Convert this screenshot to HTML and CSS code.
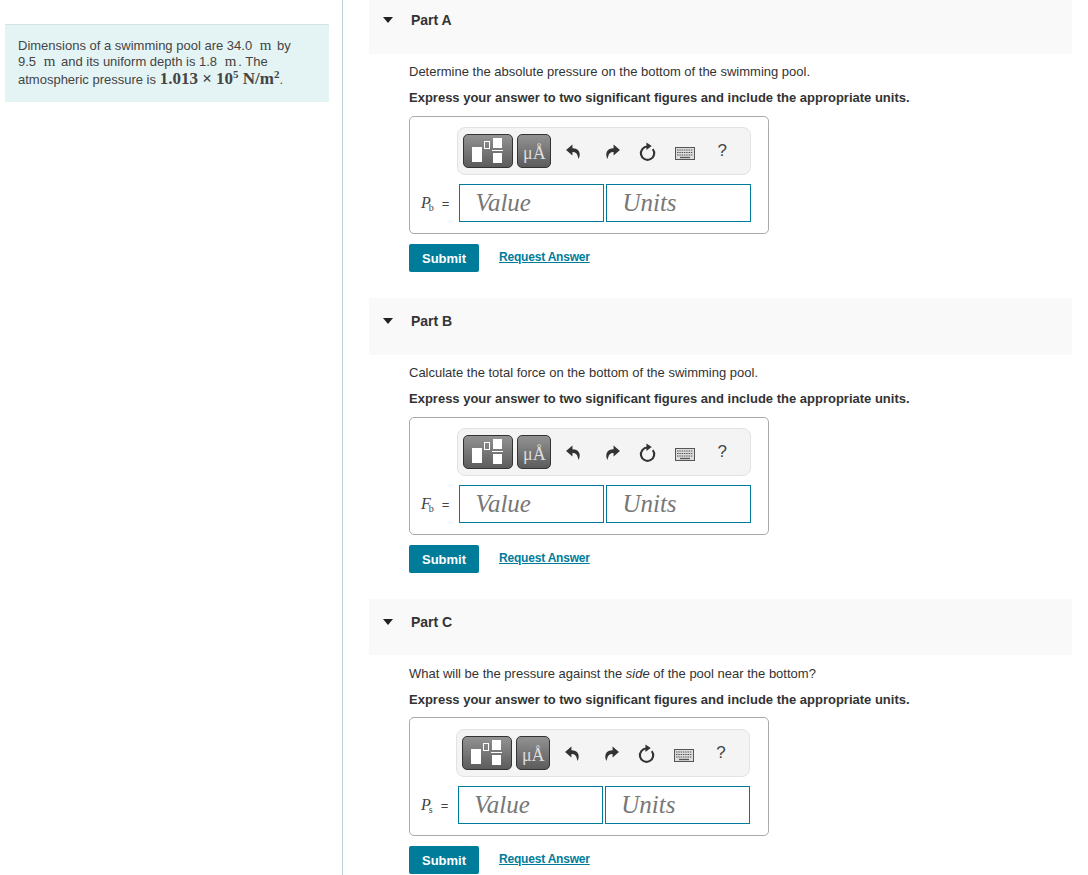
FILE: index.html
```
<!DOCTYPE html>
<html lang="en">
<head>
<meta charset="utf-8">
<title>Swimming pool pressure</title>
<link rel="stylesheet" href="styles.css">
</head>
<body>
<svg class="defs" width="0" height="0" aria-hidden="true">
  <defs>
    <symbol id="undo" viewBox="0 0 16 16"><path d="M7 1.5 1 6.7l6 5V8.4c2.6-.1 4.3.8 5 4.1.3.9.6 2 .8 2.5 1-2.2 1.4-4.4.7-6.4C12.700 6.300 10.300 5 7 5Z"/></symbol>
    <symbol id="reset" viewBox="0 0 18 18"><path d="M9 3.800a6.300 6.300 0 1 0 5 2.400" fill="none" stroke="#333" stroke-width="2"/><path d="M8 0v7l5-3.700Z" fill="#333"/></symbol>
    <symbol id="keys" viewBox="0 0 20 14"><rect x=".5" y=".5" width="19" height="12" fill="#ddd" stroke="#555"/><path d="M2 3h16M2 5.500h16M2 8h16" stroke="#555" stroke-dasharray="1.500 .8" fill="none"/><path d="M5 10.500h10" stroke="#555" stroke-width="1.300"/></symbol>
  </defs>
</svg>
<div class="page">
  <aside class="sidebar">
    <div class="intro">
      Dimensions of a swimming pool are 34.0 <span class="math spaced">m</span> by<br>
      9.5 <span class="math spaced">m</span> and its uniform depth is 1.8 <span class="math spaced">m</span>. The<br>
      atmospheric pressure is <span class="math big">1.013 × 10<sup>5</sup> N/m<sup>2</sup></span>.
    </div>
  </aside>
  <main class="parts">
    <section class="part part-first">
      <header class="part-head part-head-first"><span class="caret"></span><h2>Part A</h2></header>
      <div class="part-body">
        <p class="question">Determine the absolute pressure on the bottom of the swimming pool.</p>
        <p class="instruction">Express your answer to two significant figures and include the appropriate units.</p>
        <div class="answer">
          <div class="toolbar">
            <span class="tool-main tool-template"><i class="sq-big"></i><i class="sq-small"></i><i class="frac"><b></b><u></u><b></b></i></span>
            <span class="tool-main tool-units">μÅ</span>
            <svg class="ic ic-undo"><use href="#undo"/></svg>
            <svg class="ic ic-redo"><use href="#undo"/></svg>
            <svg class="ic ic-reset"><use href="#reset"/></svg>
            <svg class="ic ic-keys"><use href="#keys"/></svg>
            <span class="help">?</span>
          </div>
          <label class="var"><span class="math-i">P</span><sub>b</sub> <span class="eq">=</span></label>
          <div class="inputs"><div class="field">Value</div><div class="field">Units</div></div>
        </div>
        <div class="actions"><button class="submit">Submit</button><a class="reveal" href="#">Request Answer</a></div>
      </div>
    </section>
    <section class="part">
      <header class="part-head"><span class="caret"></span><h2>Part B</h2></header>
      <div class="part-body">
        <p class="question">Calculate the total force on the bottom of the swimming pool.</p>
        <p class="instruction">Express your answer to two significant figures and include the appropriate units.</p>
        <div class="answer">
          <div class="toolbar">
            <span class="tool-main tool-template"><i class="sq-big"></i><i class="sq-small"></i><i class="frac"><b></b><u></u><b></b></i></span>
            <span class="tool-main tool-units">μÅ</span>
            <svg class="ic ic-undo"><use href="#undo"/></svg>
            <svg class="ic ic-redo"><use href="#undo"/></svg>
            <svg class="ic ic-reset"><use href="#reset"/></svg>
            <svg class="ic ic-keys"><use href="#keys"/></svg>
            <span class="help">?</span>
          </div>
          <label class="var"><span class="math-i">F</span><sub>b</sub> <span class="eq">=</span></label>
          <div class="inputs"><div class="field">Value</div><div class="field">Units</div></div>
        </div>
        <div class="actions"><button class="submit">Submit</button><a class="reveal" href="#">Request Answer</a></div>
      </div>
    </section>
    <section class="part">
      <header class="part-head part-head-last"><span class="caret"></span><h2>Part C</h2></header>
      <div class="part-body">
        <p class="question">What will be the pressure against the <em>side</em> of the pool near the bottom?</p>
        <p class="instruction">Express your answer to two significant figures and include the appropriate units.</p>
        <div class="answer answer-tight">
          <div class="toolbar">
            <span class="tool-main tool-template"><i class="sq-big"></i><i class="sq-small"></i><i class="frac"><b></b><u></u><b></b></i></span>
            <span class="tool-main tool-units">μÅ</span>
            <svg class="ic ic-undo"><use href="#undo"/></svg>
            <svg class="ic ic-redo"><use href="#undo"/></svg>
            <svg class="ic ic-reset"><use href="#reset"/></svg>
            <svg class="ic ic-keys"><use href="#keys"/></svg>
            <span class="help">?</span>
          </div>
          <label class="var"><span class="math-i">P</span><sub>s</sub> <span class="eq">=</span></label>
          <div class="inputs"><div class="field">Value</div><div class="field">Units</div></div>
        </div>
        <div class="actions"><button class="submit">Submit</button><a class="reveal" href="#">Request Answer</a></div>
      </div>
    </section>
  </main>
</div>
</body>
</html>
```
FILE: styles.css
```
* { box-sizing: border-box; }
html, body { margin: 0; padding: 0; height: 875px; overflow: hidden; background: #fff; }
body { font-family: "Liberation Sans", Arial, sans-serif; font-size: 13px; color: #333; }
.defs { display: block; height: 0; }
.page { display: flex; height: 875px; }
.sidebar { width: 343px; flex: none; border-right: 1px solid #b9cfdc; padding: 24px 13px 0 5px; }
.intro { height: 78px; background: #e4f4f5; border-top: 1px solid #d5e3e4; padding: 13px 13px 0; font-size: 13px; line-height: 16px; color: #444; }
.math { font-family: "Liberation Serif", serif; }
.spaced { margin: 0 2px 0 4px; font-size: 15px; line-height: 14px; }
.big { font-size: 17px; font-weight: 700; line-height: 18px; }
.big sup { font-size: 11px; line-height: 0; vertical-align: 6px; }
.parts { width: 729px; flex: none; padding-left: 26px; }
.part { height: 301px; }
.part-first { height: 298px; }
.part-head { height: 57px; background: #f9f9f9; display: flex; align-items: flex-start; padding: 15px 0 0 14px; }
.part-head-first { height: 54px; padding-top: 12px; }
.part-head-last { height: 56px; margin-bottom: 1px; }
.caret { width: 0; height: 0; border-left: 5.500px solid transparent; border-right: 5.500px solid transparent; border-top: 6px solid #222; margin: 5px 18px 0 0; }
h2 { margin: 0; font-size: 14px; line-height: 16px; font-weight: 700; color: #333; }
.part-body { padding: 0 0 0 40px; }
.question { margin: 0; padding-top: 10px; height: 36px; line-height: 16px; font-size: 13px; white-space: nowrap; }
.question em { font-style: italic; }
.instruction { margin: 0; height: 26px; font-size: 13px; font-weight: 700; line-height: 16px; white-space: nowrap; }
.answer { width: 360px; height: 118px; border: 1px solid #aaa; border-radius: 5px; display: grid; grid-template-columns: auto auto; justify-content: start; align-items: center; padding: 10px 0 0 11px; grid-template-rows: 48px 38px; row-gap: 9px; }
.answer-tight { height: 119px; margin-top: -1px; padding-top: 11px; }
.toolbar { grid-column: 2; grid-row: 1; width: 294px; height: 48px; margin-left: -2px; background: #f4f4f4; border: 1px solid #e2e2e2; border-radius: 8px; position: relative; display: flex; align-items: center; padding-left: 5px; gap: 4px; }
.tool-main { height: 34px; border-radius: 5px; border: 1px solid #333; background: linear-gradient(#929292, #5c5c5c); display: block; position: relative; flex: none; }
.tool-template { width: 50px; }
.tool-units { width: 34px; color: #ddd; font-family: "Liberation Serif", serif; font-size: 18px; line-height: 37px; text-align: center; }
.sq-big { position: absolute; left: 8px; top: 12px; width: 10px; height: 15px; background: #fff; }
.sq-small { position: absolute; left: 20px; top: 6px; width: 6px; height: 8px; border: 1px solid #fff; }
.frac { position: absolute; left: 29px; top: 3px; width: 9px; display: flex; flex-direction: column; gap: 1px; }
.frac b { display: block; height: 10px; background: #fff; }
.frac u { display: block; height: 1px; background: #fff; margin: 1px -1px; }
.ic { position: absolute; fill: #333; }
.ic-undo { left: 107px; top: 15px; width: 17px; height: 17px; }
.ic-redo { left: 146px; top: 15px; width: 17px; height: 17px; transform: scaleX(-1); }
.ic-reset { left: 180px; top: 14px; width: 19px; height: 20px; }
.ic-keys { left: 217px; top: 19px; width: 20px; height: 14px; }
.help { position: absolute; left: 259px; top: 14px; font-size: 17px; line-height: 18px; color: #444; }
.var { grid-column: 1; grid-row: 2; display: block; font-family: "Liberation Serif", serif; font-size: 16px; color: #444; white-space: nowrap; padding-right: 10px; }
.answer-tight .var { padding-right: 10px; }
.math-i { font-style: italic; }
.var sub { font-size: 10px; line-height: 0; vertical-align: -3px; margin-left: -2px; }
.eq { font-family: "Liberation Sans", sans-serif; font-size: 13px; margin-left: 4px; }
.inputs { grid-column: 2; grid-row: 2; display: flex; gap: 2px; }
.field { width: 145px; height: 38px; border: 1px solid #007c9b; padding-left: 15px; font-family: "Liberation Serif", serif; font-style: italic; font-size: 25px; line-height: 36px; color: #777; background: #fff; }
.actions { display: flex; align-items: flex-start; margin-top: 10px; }
.submit { width: 70px; height: 28px; border: 0; border-radius: 2px; background: #007c9b; color: #fff; font: 700 13px/28px "Liberation Sans", sans-serif; padding: 1px 0 0; }
.reveal { margin: 5px 0 0 20px; font-size: 12px; font-weight: 700; letter-spacing: -.2px; line-height: 16px; color: #007c9b; text-decoration: underline; }
```
